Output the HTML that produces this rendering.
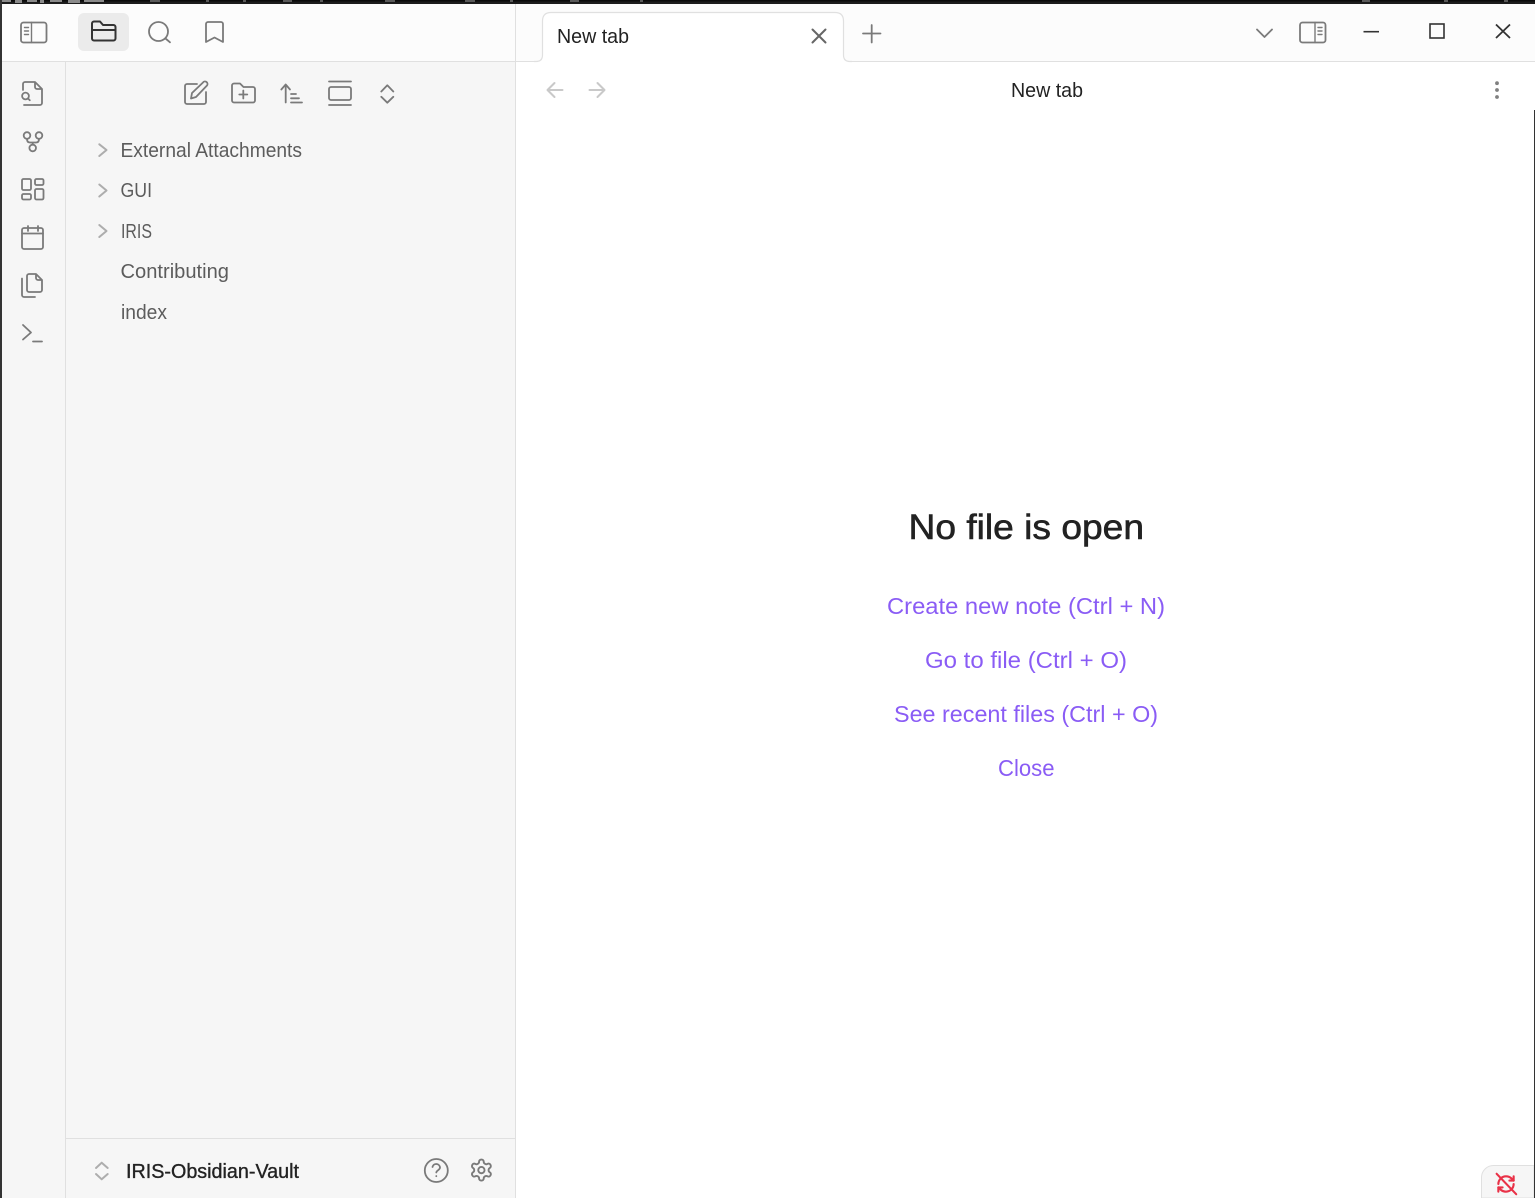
<!DOCTYPE html>
<html><head><meta charset="utf-8"><title>New tab</title>
<style>
html,body{margin:0;padding:0;background:#fff;width:1535px;height:1198px;overflow:hidden}
svg{display:block}
text{font-family:"Liberation Sans",sans-serif}
.i{fill:none;stroke:#7a7a7a;stroke-width:1.8;stroke-linecap:round;stroke-linejoin:round}
</style></head><body>
<svg width="1535" height="1198" viewBox="0 0 1535 1198" xmlns="http://www.w3.org/2000/svg">
<rect width="1535" height="1198" fill="#fff"/>
<rect width="1535" height="4" fill="#1c1c1c"/>
<rect y="0" width="1535" height="1.5" fill="#0a0a0a"/>
<g fill="#8a8a8a">
<rect x="2" y="0" width="9" height="2"/><rect x="15" y="0" width="7" height="3"/><rect x="27" y="0" width="10" height="2"/><rect x="40" y="0" width="4" height="3"/><rect x="50" y="0" width="12" height="2"/><rect x="68" y="0" width="12" height="3"/><rect x="84" y="0" width="20" height="2"/>
</g>
<g fill="#5a5a5a">
<rect x="150" y="0" width="10" height="2"/><rect x="206" y="0" width="3" height="2"/><rect x="243" y="0" width="3" height="2"/><rect x="283" y="0" width="9" height="2"/><rect x="320" y="0" width="3" height="2"/><rect x="385" y="0" width="10" height="2"/><rect x="465" y="0" width="10" height="2"/><rect x="510" y="0" width="3" height="2"/><rect x="570" y="0" width="9" height="2"/><rect x="640" y="0" width="3" height="2"/><rect x="1362" y="0" width="8" height="2"/><rect x="1444" y="0" width="4" height="2"/><rect x="1504" y="0" width="4" height="2"/>
</g>
<rect x="0" y="0" width="2" height="1198" fill="#333"/>
<rect x="2" y="4" width="1533" height="58" fill="#fcfcfc"/>
<rect x="2" y="62" width="514" height="1136" fill="#f6f6f6"/>
<rect x="2" y="61" width="540" height="1" fill="#e0e0e0"/>
<rect x="844" y="61" width="691" height="1" fill="#e0e0e0"/>
<rect x="65" y="62" width="1" height="1136" fill="#e0e0e0"/>
<rect x="515" y="4" width="1" height="1194" fill="#e0e0e0"/>
<rect x="66" y="1138" width="449" height="1" fill="#e0e0e0"/>

<!-- tab -->
<path d="M534 61.5 H536 Q542.5 61.5 542.5 55 V21 Q542.5 12.5 551 12.5 H835 Q843.5 12.5 843.5 21 V55 Q843.5 61.5 850 61.5 H852 V64 H534 Z" fill="#fff"/>
<path d="M534 61.5 H536 Q542.5 61.5 542.5 55 V21 Q542.5 12.5 551 12.5 H835 Q843.5 12.5 843.5 21 V55 Q843.5 61.5 850 61.5 H852" fill="none" stroke="#e0e0e0" stroke-width="1.2"/>
<text x="557" y="43" font-size="20" fill="#222" textLength="72" lengthAdjust="spacingAndGlyphs">New tab</text>
<path d="M812.5 29.5 L825.5 42.5 M825.5 29.5 L812.5 42.5" fill="none" stroke="#666" stroke-width="2" stroke-linecap="round"/>
<path d="M863 33.5 H880.5 M871.7 25 V42.5" class="i"/>

<!-- top left icons -->
<g class="i">
<rect x="21" y="22.5" width="25.5" height="20" rx="2.5"/>
<path d="M31.5 22.5 V42.5 M24.5 27.5 H28.5 M24.5 31 H28.5 M24.5 34.5 H28.5" stroke-width="1.4"/>
</g>
<rect x="78" y="13" width="51" height="38" rx="6" fill="#ebebeb"/>
<path d="M92 30 V23.5 A2 2 0 0 1 94 21.5 H100 L103 25 H113.5 A2 2 0 0 1 115.5 27 V38.5 A2 2 0 0 1 113.5 40.5 H94 A2 2 0 0 1 92 38.5 Z M92 30 H115.5" fill="none" stroke="#333" stroke-width="2" stroke-linejoin="round"/>
<g class="i">
<circle cx="158.500" cy="31.500" r="9.500"/><path d="M165.500 38.500 L170 42.300"/>
<path d="M206 24 A2 2 0 0 1 208 22 H221 A2 2 0 0 1 223 24 V42 L214.500 37.500 L206 42 Z"/>
</g>

<!-- ribbon icons -->
<g class="i">
<path d="M23 90 V84 A2 2 0 0 1 25 82 H35 L42 89 V103 A2 2 0 0 1 40 105 H24 M35 82 V87 A2 2 0 0 0 37 89 H42"/>
<circle cx="25.500" cy="96" r="3.400"/><path d="M28.200 98.600 L29.800 100.200"/>
<circle cx="27" cy="135.500" r="3.300"/><circle cx="39" cy="135.500" r="3.300"/><circle cx="32.700" cy="148" r="3.300"/>
<path d="M27 139 Q27 142.500 30 142.500 H36 Q39 142.500 39 139 M32.700 142.500 V144.500"/>
<rect x="22" y="179" width="9" height="11" rx="1.500"/><rect x="35" y="179" width="8.500" height="6" rx="1.500"/><rect x="22" y="194" width="9" height="5.500" rx="1.500"/><rect x="35" y="189" width="8.500" height="10.500" rx="1.500"/>
<rect x="22" y="228" width="21" height="21" rx="2"/><path d="M22 233.500 H43 M28 226 V231 M38 226 V231"/>
<path d="M27 276 A2 2 0 0 1 29 274 H36 L42 280 V290 A2 2 0 0 1 40 292 H29 A2 2 0 0 1 27 290 Z M36 274 V278 A2 2 0 0 0 38 280 H42 M22 278.500 V295 A2 2 0 0 0 24 297 H35"/>
<path d="M23 325 L31 332.500 L23 339.500 M33 341.500 H42"/>
</g>

<!-- file toolbar -->
<g class="i">
<path d="M197 84 H187 A2 2 0 0 0 185 86 V102 A2 2 0 0 0 187 104 H204 A2 2 0 0 0 206 102 V92"/>
<path d="M191 98.500 L192 93 L203 82.500 A2.200 2.200 0 0 1 207 85.500 L196 97 Z"/>
<path d="M232 85.500 A2 2 0 0 1 234 83.500 H240 L243.500 87 H253 A2 2 0 0 1 255 89 V100.500 A2 2 0 0 1 253 102.500 H234 A2 2 0 0 1 232 100.500 Z"/>
<path d="M243.300 90.500 V98.500 M239.300 94.500 H247.300"/>
<path d="M285.700 84.500 V102.500 M281.300 89.500 L285.700 84.500 L290 89.500 M291 94 H296 M291 98.300 H299 M291 102.500 H302"/>
<path d="M329 81.500 H351 M329 105 H351"/>
<rect x="329" y="87" width="22" height="13" rx="2"/>
<path d="M381.300 91.500 L387.300 85.300 L393.300 91.500 M381.300 96.800 L387.300 102.700 L393.300 96.800"/>
</g>

<!-- tree -->
<g fill="none" stroke="#adadad" stroke-width="2" stroke-linecap="round" stroke-linejoin="round">
<path d="M99.300 144.300 L106.500 150 L99.300 156"/>
<path d="M99.300 184.500 L106.500 190.500 L99.300 196.500"/>
<path d="M99.300 225 L106.500 231 L99.300 237"/>
</g>
<g font-size="20" fill="#5c5c5c">
<text x="120.500" y="157" textLength="181.500" lengthAdjust="spacingAndGlyphs">External Attachments</text>
<text x="120.500" y="197" textLength="31.500" lengthAdjust="spacingAndGlyphs">GUI</text>
<text x="121" y="238" textLength="31" lengthAdjust="spacingAndGlyphs">IRIS</text>
<text x="120.500" y="278" textLength="108.500" lengthAdjust="spacingAndGlyphs">Contributing</text>
<text x="121" y="319" textLength="46" lengthAdjust="spacingAndGlyphs">index</text>
</g>

<!-- footer -->
<path d="M96 1168 L101.700 1162.700 L107.700 1168 M96 1174 L101.700 1179.300 L107.700 1174" fill="none" stroke="#adadad" stroke-width="2" stroke-linecap="round" stroke-linejoin="round"/>
<text x="126" y="1178" font-size="20" fill="#222" stroke="#222" stroke-width=".35" textLength="173" lengthAdjust="spacingAndGlyphs">IRIS-Obsidian-Vault</text>
<g class="i">
<circle cx="436.300" cy="1170.500" r="11.500"/>
<path d="M432.500 1167 A3.800 3.800 0 0 1 440 1167.500 C440 1170 436.300 1170.500 436.300 1172.500 M436.300 1176 V1176.200"/>
<g transform="translate(468.800,1157.500) scale(1.05)">
<path d="M12.220 2h-.44a2 2 0 0 0-2 2v.18a2 2 0 0 1-1 1.730l-.43.25a2 2 0 0 1-2 0l-.15-.08a2 2 0 0 0-2.730.73l-.22.38a2 2 0 0 0 .73 2.730l.15.1a2 2 0 0 1 1 1.720v.51a2 2 0 0 1-1 1.740l-.15.09a2 2 0 0 0-.73 2.730l.22.38a2 2 0 0 0 2.730.73l.15-.08a2 2 0 0 1 2 0l.43.25a2 2 0 0 1 1 1.730V20a2 2 0 0 0 2 2h.44a2 2 0 0 0 2-2v-.18a2 2 0 0 1 1-1.730l.43-.25a2 2 0 0 1 2 0l.15.08a2 2 0 0 0 2.730-.73l.22-.39a2 2 0 0 0-.73-2.730l-.15-.08a2 2 0 0 1-1-1.740v-.5a2 2 0 0 1 1-1.740l.15-.09a2 2 0 0 0 .73-2.730l-.22-.38a2 2 0 0 0-2.730-.73l-.15.08a2 2 0 0 1-2 0l-.43-.25a2 2 0 0 1-1-1.730V4a2 2 0 0 0-2-2z" stroke-width="1.800"/>
<circle cx="12" cy="12" r="3" stroke-width="1.800"/>
</g>
</g>

<!-- right header -->
<g class="i">
<path d="M1257 29.500 L1264.500 37 L1272 29.500"/>
<rect x="1300" y="22.500" width="25.500" height="20" rx="2.500"/>
<path d="M1315 22.500 V42.500 M1318 27.500 H1322 M1318 31 H1322 M1318 34.500 H1322" stroke-width="1.400"/>
</g>
<path d="M1363.500 31.700 H1379" stroke="#333" stroke-width="1.600" fill="none"/>
<rect x="1430" y="24" width="14" height="14" fill="none" stroke="#333" stroke-width="1.600"/>
<path d="M1496 24.500 L1510 38 M1510 24.500 L1496 38" stroke="#333" stroke-width="1.800" fill="none"/>
<circle cx="1497" cy="83.200" r="1.900" fill="#808080"/><circle cx="1497" cy="90" r="1.900" fill="#808080"/><circle cx="1497" cy="97" r="1.900" fill="#808080"/>

<!-- nav -->
<g fill="none" stroke="#c9c9c9" stroke-width="2" stroke-linecap="round" stroke-linejoin="round">
<path d="M547.500 90 H562.500 M554.500 83 L547.500 90 L554.500 97"/>
<path d="M589.500 90 H604.500 M597.500 83 L604.500 90 L597.500 97"/>
</g>
<text x="1011" y="97" font-size="20" fill="#222" textLength="72" lengthAdjust="spacingAndGlyphs">New tab</text>

<!-- empty state -->
<text x="908.500" y="539" font-size="35" fill="#222" stroke="#222" stroke-width=".6" textLength="235.500" lengthAdjust="spacingAndGlyphs">No file is open</text>
<g font-size="23.500" fill="#8a5cf5">
<text x="887" y="614" textLength="278" lengthAdjust="spacingAndGlyphs">Create new note (Ctrl + N)</text>
<text x="925" y="668" textLength="202" lengthAdjust="spacingAndGlyphs">Go to file (Ctrl + O)</text>
<text x="894" y="722" textLength="264" lengthAdjust="spacingAndGlyphs">See recent files (Ctrl + O)</text>
<text x="998" y="776" textLength="56.500" lengthAdjust="spacingAndGlyphs">Close</text>
</g>

<!-- status -->
<path d="M1481.500 1198 V1177 A12 12 0 0 1 1493.500 1165.500 H1534 V1198 Z" fill="#f6f6f6" stroke="#e0e0e0"/>
<rect x="1534" y="110" width="1" height="1088" fill="#333"/>
<g transform="translate(1495.800,1173.800) scale(.85)" fill="none" stroke="#e93147" stroke-width="2.500" stroke-linecap="round" stroke-linejoin="round">
<path d="M3 12a9 9 0 0 1 9-9 9.750 9.750 0 0 1 6.740 2.740L21 8"/>
<path d="M21 3v5h-5"/>
<path d="M21 12a9 9 0 0 1-9 9 9.750 9.750 0 0 1-6.740-2.740L3 16"/>
<path d="M8 16H3v5"/>
<path d="M1 0 L24 24"/>
</g>
</svg>
</body></html>
